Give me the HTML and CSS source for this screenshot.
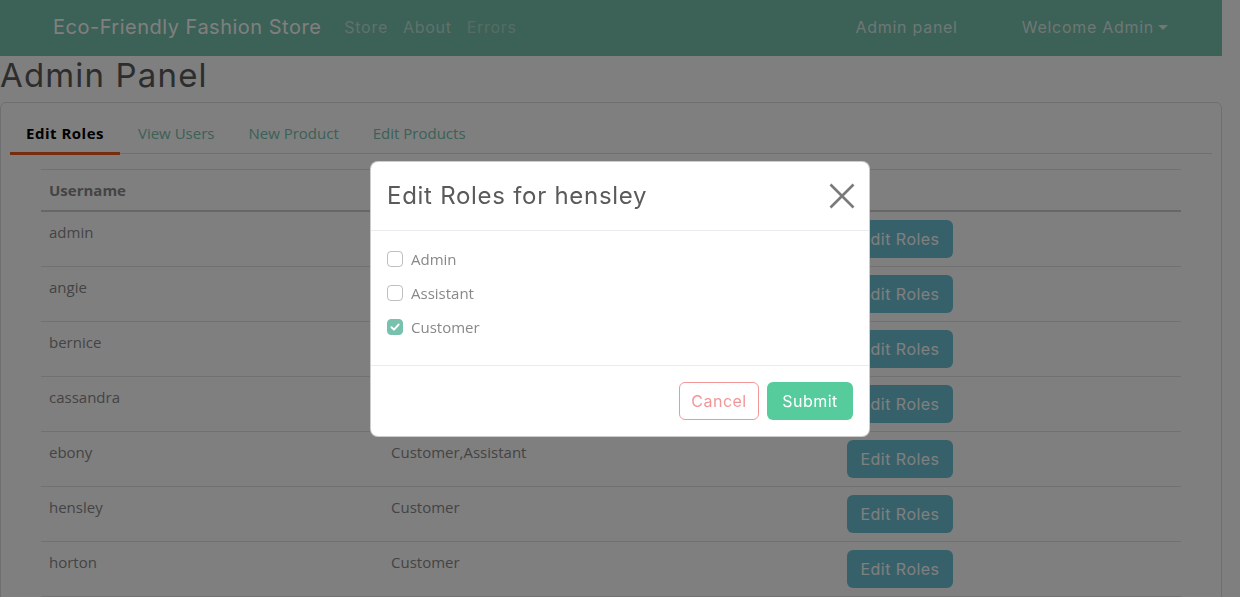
FILE: index.html
```html
<!DOCTYPE html>
<html lang="en">
<head>
<meta charset="utf-8">
<title>Admin Panel - Eco-Friendly Fashion Store</title>
<link rel="stylesheet" href="styles.css">
</head>
<body>
<div class="page">
  <nav class="navbar">
    <div class="nav-container">
      <a class="brand" href="#">Eco-Friendly Fashion Store</a>
      <ul class="nav-links">
        <li><a class="nav-link" href="#">Store</a></li>
        <li><a class="nav-link" href="#">About</a></li>
        <li><a class="nav-link disabled" href="#">Errors</a></li>
      </ul>
      <ul class="nav-right">
        <li><a class="nav-link light" href="#">Admin panel</a></li>
        <li><a class="nav-link light dropdown-toggle" href="#">Welcome Admin</a></li>
      </ul>
    </div>
  </nav>

  <h1 class="page-title">Admin Panel</h1>

  <div class="card">
    <ul class="tabs">
      <li><a class="tab active" href="#">Edit Roles</a></li>
      <li><a class="tab" href="#">View Users</a></li>
      <li><a class="tab" href="#">New Product</a></li>
      <li><a class="tab" href="#">Edit Products</a></li>
    </ul>
    <div class="table-container">
      <table class="users">
        <thead>
          <tr><th class="c1">Username</th><th class="c2">Roles</th><th class="c3"></th></tr>
        </thead>
        <tbody>
          <tr><td>admin</td><td>Admin</td><td><button class="btn btn-info">Edit Roles</button></td></tr>
          <tr><td>angie</td><td>Customer</td><td><button class="btn btn-info">Edit Roles</button></td></tr>
          <tr><td>bernice</td><td>Customer</td><td><button class="btn btn-info">Edit Roles</button></td></tr>
          <tr><td>cassandra</td><td>Customer</td><td><button class="btn btn-info">Edit Roles</button></td></tr>
          <tr><td>ebony</td><td>Customer,Assistant</td><td><button class="btn btn-info">Edit Roles</button></td></tr>
          <tr><td>hensley</td><td>Customer</td><td><button class="btn btn-info">Edit Roles</button></td></tr>
          <tr><td>horton</td><td>Customer</td><td><button class="btn btn-info">Edit Roles</button></td></tr>
        </tbody>
      </table>
    </div>
  </div>
</div>

<div class="backdrop"></div>

<div class="modal-layer">
  <div class="modal">
    <div class="modal-header">
      <h5 class="modal-title">Edit Roles for hensley</h5>
      <button class="btn-close" aria-label="Close">
        <svg width="26" height="26" viewBox="0 0 26 26"><path d="M1.5 1.5 L24.5 24.5 M24.5 1.5 L1.5 24.5" stroke="#7a7a7a" stroke-width="2.6" fill="none"/></svg>
      </button>
    </div>
    <div class="modal-body">
      <label class="form-check"><span class="check"></span><span>Admin</span></label>
      <label class="form-check"><span class="check"></span><span>Assistant</span></label>
      <label class="form-check"><span class="check checked"><svg width="16" height="16" viewBox="0 0 16 16"><path d="M4.5 8.2 L7 10.6 L11.6 5.6" stroke="#fff" stroke-width="2" fill="none" stroke-linecap="round" stroke-linejoin="round"/></svg></span><span>Customer</span></label>
    </div>
    <div class="modal-footer">
      <button class="btn btn-outline-secondary">Cancel</button>
      <button class="btn btn-success">Submit</button>
    </div>
  </div>
</div>
</body>
</html>
```

FILE: styles.css
```css
* { box-sizing: border-box; }

html, body {
  margin: 0;
  height: 597px;
  overflow: hidden;
}

body {
  font-family: "Open Sans", "Noto Sans", sans-serif;
  font-size: 15px;
  line-height: 24px;
  color: #888888;
  background: #ffffff;
  padding-right: 18px;
}

.page {
  width: 1222px;
}

a { text-decoration: none; }
ul { list-style: none; margin: 0; padding: 0; }

/* Navbar */
.navbar {
  background: #78c2ad;
  height: 56px;
  padding: 7px 0 9px;
}
.nav-container {
  width: 1140px;
  margin: 0 auto;
  padding: 0 12px;
  display: flex;
  align-items: center;
  height: 40px;
}
.brand {
  font-family: "Inter", "Lato", sans-serif;
  letter-spacing: 0.025em;
  font-size: 20px;
  line-height: 30px;
  color: #ffffff;
  margin-right: 15px;
}
.nav-links { display: flex; }
.nav-links li + li { margin-left: -1px; }
.nav-right { display: flex; margin-left: auto; gap: 48px; margin-right: -7px; }
.nav-link {
  display: block;
  font-family: "Inter", "Lato", sans-serif;
  letter-spacing: 0.045em;
  font-size: 16px;
  line-height: 24px;
  padding: 8px;
  color: rgba(255, 255, 255, 0.55);
}
.nav-link.light { color: rgba(255, 255, 255, 0.75); }
.nav-link.disabled { color: rgba(255, 255, 255, 0.4); }
.dropdown-toggle::after {
  content: "";
  display: inline-block;
  margin-left: 4px;
  vertical-align: 3px;
  border-top: 5px solid;
  border-left: 5px solid transparent;
  border-right: 5px solid transparent;
}

/* Title */
.page-title {
  font-family: "Inter", "Lato", sans-serif;
  letter-spacing: 0.035em;
  font-weight: 400;
  font-size: 33px;
  line-height: 38px;
  color: #5a5a5a;
  margin: 0 0 8px;
}

/* Card */
.card {
  border: 1px solid rgba(0, 0, 0, 0.13);
  border-radius: 6px;
  padding: 10px 9px 0;
  height: 560px;
}
.tabs {
  display: flex;
  border-bottom: 1px solid #dfdfdf;
  height: 41px;
}
.tab {
  display: block;
  padding: 8px 16px 7px;
  line-height: 24px;
  font-size: 15px;
  color: #78c2ad;
  border-bottom: 3px solid transparent;
  margin-right: 2px;
}
.tab.active {
  color: #000000;
  font-weight: 700;
  letter-spacing: 0.5px;
  border-bottom-color: #e85a1f;
}

.table-container {
  width: 1140px;
  margin: 15px auto 0;
}
.users {
  width: 100%;
  border-collapse: collapse;
  table-layout: fixed;
}
.users th, .users td {
  text-align: left;
  vertical-align: top;
  padding: 8px;
  line-height: 24px;
  font-size: 15px;
}
.users thead th {
  border-top: 1px solid #e3e3e3;
  border-bottom: 2px solid #cfcfcf;
  font-weight: 700;
}
.users tbody td {
  border-bottom: 1px solid #e3e3e3;
}
.c1 { width: 30%; }
.c2 { width: 40%; }
.c3 { width: 30%; }

/* Buttons */
.btn {
  font-family: "Inter", "Lato", sans-serif;
  letter-spacing: 0.03em;
  font-size: 16px;
  line-height: 24px;
  padding: 6px 0;
  border: 1px solid transparent;
  border-radius: 6px;
  cursor: pointer;
  height: 38px;
  white-space: nowrap;
  display: inline-block;
  text-align: center;
}
.btn-info { background: #6cc3d5; color: #ffffff; width: 106px; }
.btn-success { background: #56cc9d; color: #ffffff; width: 86px; }
.btn-outline-secondary { background: #ffffff; border-color: #f3969a; color: #f3969a; width: 80px; }

/* Backdrop & modal */
.backdrop {
  position: fixed;
  inset: 0;
  background: rgba(0, 0, 0, 0.5);
}
.modal-layer {
  position: fixed;
  inset: 0;
  display: flex;
  align-items: center;
  justify-content: center;
}
.modal {
  width: 500px;
  background: #ffffff;
  border: 1px solid rgba(0, 0, 0, 0.2);
  border-radius: 8px;
}
.modal-header {
  display: flex;
  align-items: center;
  justify-content: space-between;
  padding: 16px 14px 16px 16px;
  border-bottom: 1px solid #e9ecef;
}
.modal-title {
  margin: 0;
  font-family: "Inter", "Lato", sans-serif;
  letter-spacing: 0.03em;
  font-weight: 400;
  font-size: 24px;
  line-height: 36px;
  color: #5a5a5a;
}
.btn-close {
  border: 0;
  background: transparent;
  padding: 0;
  width: 26px;
  height: 26px;
  display: flex;
}
.modal-body {
  padding: 16px;
  border-bottom: 1px solid #e9ecef;
}
.form-check {
  display: flex;
  align-items: center;
  gap: 8px;
  line-height: 24px;
  margin-bottom: 10px;
  font-size: 15px;
  color: #888888;
}
.check {
  width: 16px;
  height: 16px;
  border: 1px solid rgba(0, 0, 0, 0.25);
  border-radius: 4px;
  display: inline-flex;
  flex: none;
}
.check.checked {
  background: #78c2ad;
  border-color: #78c2ad;
}
.check.checked svg { margin: -1px; }
.modal-footer {
  display: flex;
  justify-content: flex-end;
  gap: 8px;
  padding: 16px 16px 16px;
}
```
